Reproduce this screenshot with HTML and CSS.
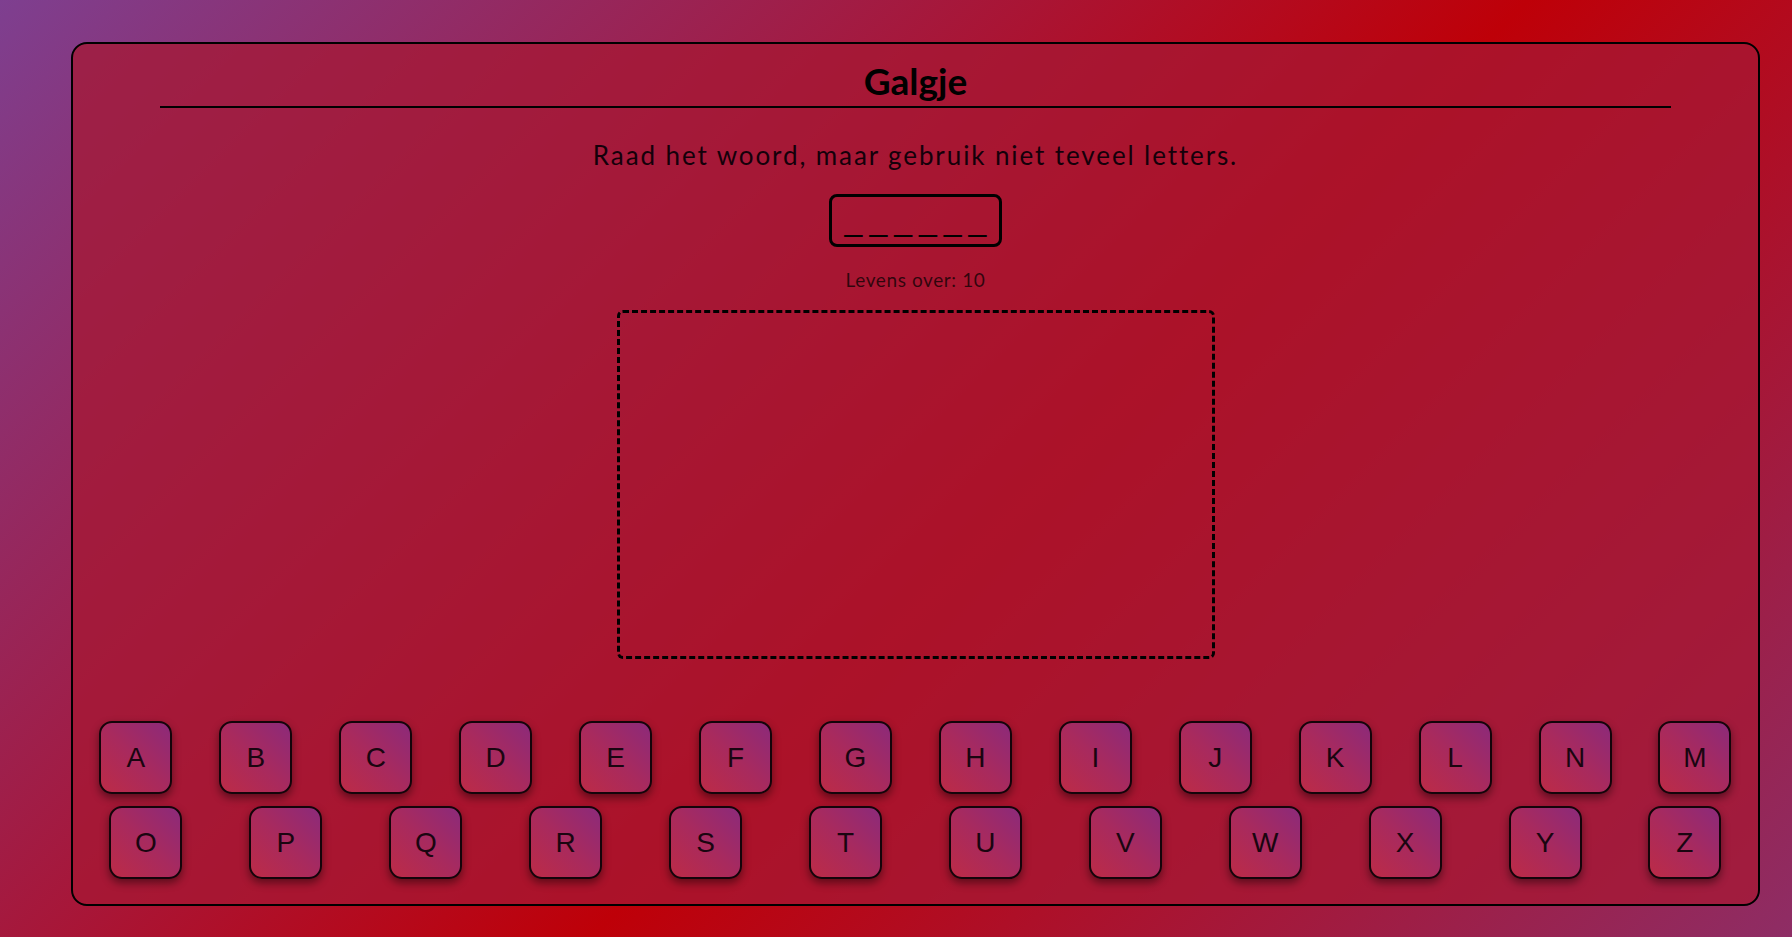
FILE: index.html
```html
<!DOCTYPE html>
<html lang="nl">
<head>
<meta charset="utf-8">
<title>Galgje</title>
<link rel="stylesheet" href="styles.css">
</head>
<body>
<main class="card">
  <header class="header">
    <h1 class="title">Galgje</h1>
  </header>
  <p class="subtitle">Raad het woord, maar gebruik niet teveel letters.</p>
  <div class="word">______</div>
  <p class="lives">Levens over: 10</p>
  <div class="drawing"></div>
  <div class="keyboard">
    <div class="row row-1">
      <button class="key">A</button>
      <button class="key">B</button>
      <button class="key">C</button>
      <button class="key">D</button>
      <button class="key">E</button>
      <button class="key">F</button>
      <button class="key">G</button>
      <button class="key">H</button>
      <button class="key">I</button>
      <button class="key">J</button>
      <button class="key">K</button>
      <button class="key">L</button>
      <button class="key">N</button>
      <button class="key">M</button>
    </div>
    <div class="row row-2">
      <button class="key">O</button>
      <button class="key">P</button>
      <button class="key">Q</button>
      <button class="key">R</button>
      <button class="key">S</button>
      <button class="key">T</button>
      <button class="key">U</button>
      <button class="key">V</button>
      <button class="key">W</button>
      <button class="key">X</button>
      <button class="key">Y</button>
      <button class="key">Z</button>
    </div>
  </div>
</main>
</body>
</html>
```
FILE: styles.css
```css
html, body {
  margin: 0;
  padding: 0;
}

body {
  width: 1792px;
  height: 937px;
  overflow: hidden;
  background: linear-gradient(135deg, #7e3f90 0%, #be0008 56%, #8e2d65 100%);
  font-family: Lato, "Open Sans", sans-serif;
  color: #000;
}

.card {
  box-sizing: border-box;
  width: 1689px;
  height: 864px;
  margin: 42px 0 0 71px;
  border: 2px solid #000;
  border-radius: 16px;
  background: rgba(165, 24, 52, 0.75);
  display: flex;
  flex-direction: column;
  align-items: center;
}

.header {
  align-self: stretch;
  margin: 0 87px;
  padding: 15px 0 3px;
  border-bottom: 2px solid #000;
}

.title {
  margin: 0;
  font-size: 37px;
  line-height: 44px;
  font-weight: 700;
  text-align: center;
}

.subtitle {
  margin: 31px 0 0;
  font-size: 26px;
  line-height: 32px;
  letter-spacing: 1.9px;
  color: #14000a;
}

.word {
  box-sizing: border-box;
  width: 173px;
  height: 53px;
  margin-top: 23px;
  border: 3px solid #000;
  border-radius: 8px;
  font-family: "Liberation Sans", Arial, sans-serif;
  font-size: 32px;
  line-height: 47px;
  letter-spacing: 7px;
  text-indent: 7px;
  text-align: center;
  color: #000;
}

.lives {
  margin: 21px 0 0;
  font-size: 19px;
  line-height: 24px;
  letter-spacing: 0.6px;
  color: rgba(0, 0, 0, 0.72);
}

.drawing {
  box-sizing: border-box;
  width: 598px;
  height: 349px;
  margin-top: 18px;
  border: 3px dashed #000;
  border-radius: 6px;
}

.keyboard {
  align-self: stretch;
  margin: 62px 3px 0;
  display: flex;
  flex-direction: column;
  gap: 12px;
}

.row {
  display: flex;
  justify-content: space-around;
}

.key {
  box-sizing: border-box;
  width: 73px;
  height: 73px;
  padding: 0;
  border: 2px solid #14040a;
  border-radius: 13px;
  background: linear-gradient(45deg, #bc2b47 0%, #a82a5e 50%, #8c2a7a 100%);
  box-shadow: 0 4px 8px rgba(0, 0, 0, 0.45);
  font-family: "Liberation Sans", Arial, sans-serif;
  font-size: 28px;
  color: #1a0510;
  cursor: pointer;
}
```
